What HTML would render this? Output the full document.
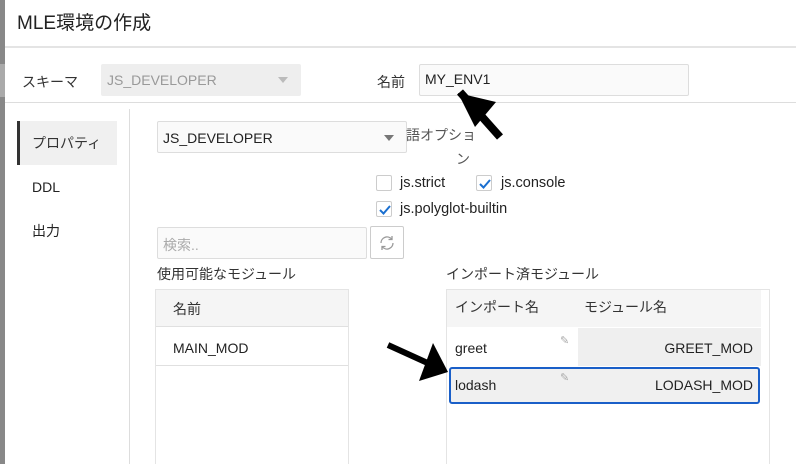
<!DOCTYPE html>
<html><head><meta charset="utf-8"><style>
*{box-sizing:border-box;margin:0;padding:0}
body{width:796px;height:464px;overflow:hidden;background:#fff;font-family:"Liberation Sans","Noto Sans CJK JP",sans-serif;color:#222;position:relative;font-size:14px}
.a{position:absolute}
.box{position:absolute;border:1px solid #ddd;border-radius:2px;background:#fafafa}
.tri{position:absolute;width:0;height:0;border-left:5px solid transparent;border-right:5px solid transparent;border-top:6px solid #777}
.cb{position:absolute;width:16px;height:16px;border:1px solid #ccc;border-radius:2px;background:#fff}
.cb svg{position:absolute;left:1px;top:1px}
</style></head><body>
<div class="a" style="left:0;top:0;width:5px;height:464px;background:#888"></div>
<div class="a" style="left:0;top:64px;width:5px;height:33px;background:#aaa"></div>
<div class="a" style="left:17px;top:8px;font-size:19px;color:#222">MLE環境の作成</div>
<div class="a" style="left:5px;top:46px;width:791px;height:2px;background:#e4e4e4"></div>
<div class="a" style="left:22px;top:72px;font-size:14px;color:#333">スキーマ</div>
<div class="a" style="left:101px;top:64px;width:200px;height:32px;background:#eee;border-radius:2px"></div>
<div class="a" style="left:107px;top:72px;color:#999">JS_DEVELOPER</div>
<div class="tri" style="left:278px;top:77px;border-top-color:#bbb"></div>
<div class="a" style="left:377px;top:72px;color:#333">名前</div>
<div class="box" style="left:419px;top:64px;width:270px;height:32px"></div>
<div class="a" style="left:425px;top:71px;color:#222">MY_ENV1</div>
<div class="a" style="left:5px;top:102px;width:791px;height:1px;background:#ddd"></div>
<div class="a" style="left:17px;top:121px;width:100px;height:44px;background:#f0f0f0;border-left:3px solid #333"></div>
<div class="a" style="left:32px;top:133px;color:#333">プロパティ</div>
<div class="a" style="left:32px;top:179px">DDL</div>
<div class="a" style="left:32px;top:221px">出力</div>
<div class="a" style="left:129px;top:109px;width:1px;height:355px;background:#ddd"></div>
<div class="box" style="left:157px;top:121px;width:250px;height:32px"></div>
<div class="a" style="left:163px;top:130px">JS_DEVELOPER</div>
<div class="tri" style="left:384px;top:135px"></div>
<div class="a" style="left:406px;top:125px;color:#555">語オプショ</div>
<div class="a" style="left:456px;top:149px;color:#555">ン</div>
<div class="cb" style="left:376px;top:175px"></div>
<div class="a" style="left:400px;top:175px;font-size:14.5px">js.strict</div>
<div class="cb" style="left:476px;top:175px"><svg width="14" height="14"><path d="M2 7 L5.5 10.5 L12 3" stroke="#1a6fd0" stroke-width="2" fill="none"/></svg></div>
<div class="a" style="left:501px;top:175px;font-size:14.5px">js.console</div>
<div class="cb" style="left:376px;top:201px"><svg width="14" height="14"><path d="M2 7 L5.5 10.5 L12 3" stroke="#1a6fd0" stroke-width="2" fill="none"/></svg></div>
<div class="a" style="left:400px;top:201px;font-size:14.5px">js.polyglot-builtin</div>
<div class="box" style="left:157px;top:227px;width:210px;height:32px"></div>
<div class="a" style="left:163px;top:235px;color:#aaa">検索..</div>
<div class="box" style="left:370px;top:226px;width:34px;height:33px;background:#fff;border-color:#ccc"></div>
<svg class="a" style="left:378px;top:234px" width="18" height="18" viewBox="0 0 18 18"><path d="M3 9a6 6 0 0 1 10.5-4M15 9a6 6 0 0 1-10.5 4" stroke="#999" stroke-width="1.3" fill="none"/><path d="M14 2v3.5h-3.5M4 16v-3.5h3.5" stroke="#999" stroke-width="1.3" fill="none"/></svg>
<div class="a" style="left:157px;top:264px;color:#333">使用可能なモジュール</div>
<div class="a" style="left:155px;top:289px;width:194px;height:175px;border:1px solid #e4e4e4;border-bottom:none"></div>
<div class="a" style="left:156px;top:290px;width:192px;height:37px;background:#f5f5f5;border-bottom:1px solid #e0e0e0"></div>
<div class="a" style="left:173px;top:299px;color:#333">名前</div>
<div class="a" style="left:173px;top:340px;color:#222">MAIN_MOD</div>
<div class="a" style="left:156px;top:365px;width:192px;height:1px;background:#e0e0e0"></div>
<div class="a" style="left:446px;top:264px;color:#333">インポート済モジュール</div>
<div class="a" style="left:446px;top:289px;width:324px;height:175px;border:1px solid #e4e4e4;border-bottom:none"></div>
<div class="a" style="left:447px;top:290px;width:314px;height:37px;background:#f5f5f5"></div>
<div class="a" style="left:455px;top:297px;color:#333">インポート名</div>
<div class="a" style="left:584px;top:297px;color:#333">モジュール名</div>
<div class="a" style="left:578px;top:328px;width:183px;height:38px;background:#efefef"></div>
<div class="a" style="left:455px;top:340px">greet</div>
<div class="a" style="right:43px;top:340px">GREET_MOD</div>
<div class="a" style="left:560px;top:334px;color:#aaa;font-size:11px">✎</div>
<div class="a" style="left:449px;top:367px;width:311px;height:37px;background:#f0f0f0;border:2px solid #1a5fc8;border-radius:3px"></div>
<div class="a" style="left:455px;top:377px">lodash</div>
<div class="a" style="right:43px;top:377px">LODASH_MOD</div>
<div class="a" style="left:560px;top:371px;color:#aaa;font-size:11px">✎</div>
<svg class="a" style="left:0;top:0" width="796" height="464">
<path d="M460 92 L500 137" stroke="#000" stroke-width="8" fill="none"/>
<polygon points="458,93 496,102 475,127" fill="#000"/>
<path d="M388 345 L432 365" stroke="#000" stroke-width="6" fill="none"/>
<polygon points="433,343 448,372 419,381" fill="#000"/>
</svg>
</body></html>
